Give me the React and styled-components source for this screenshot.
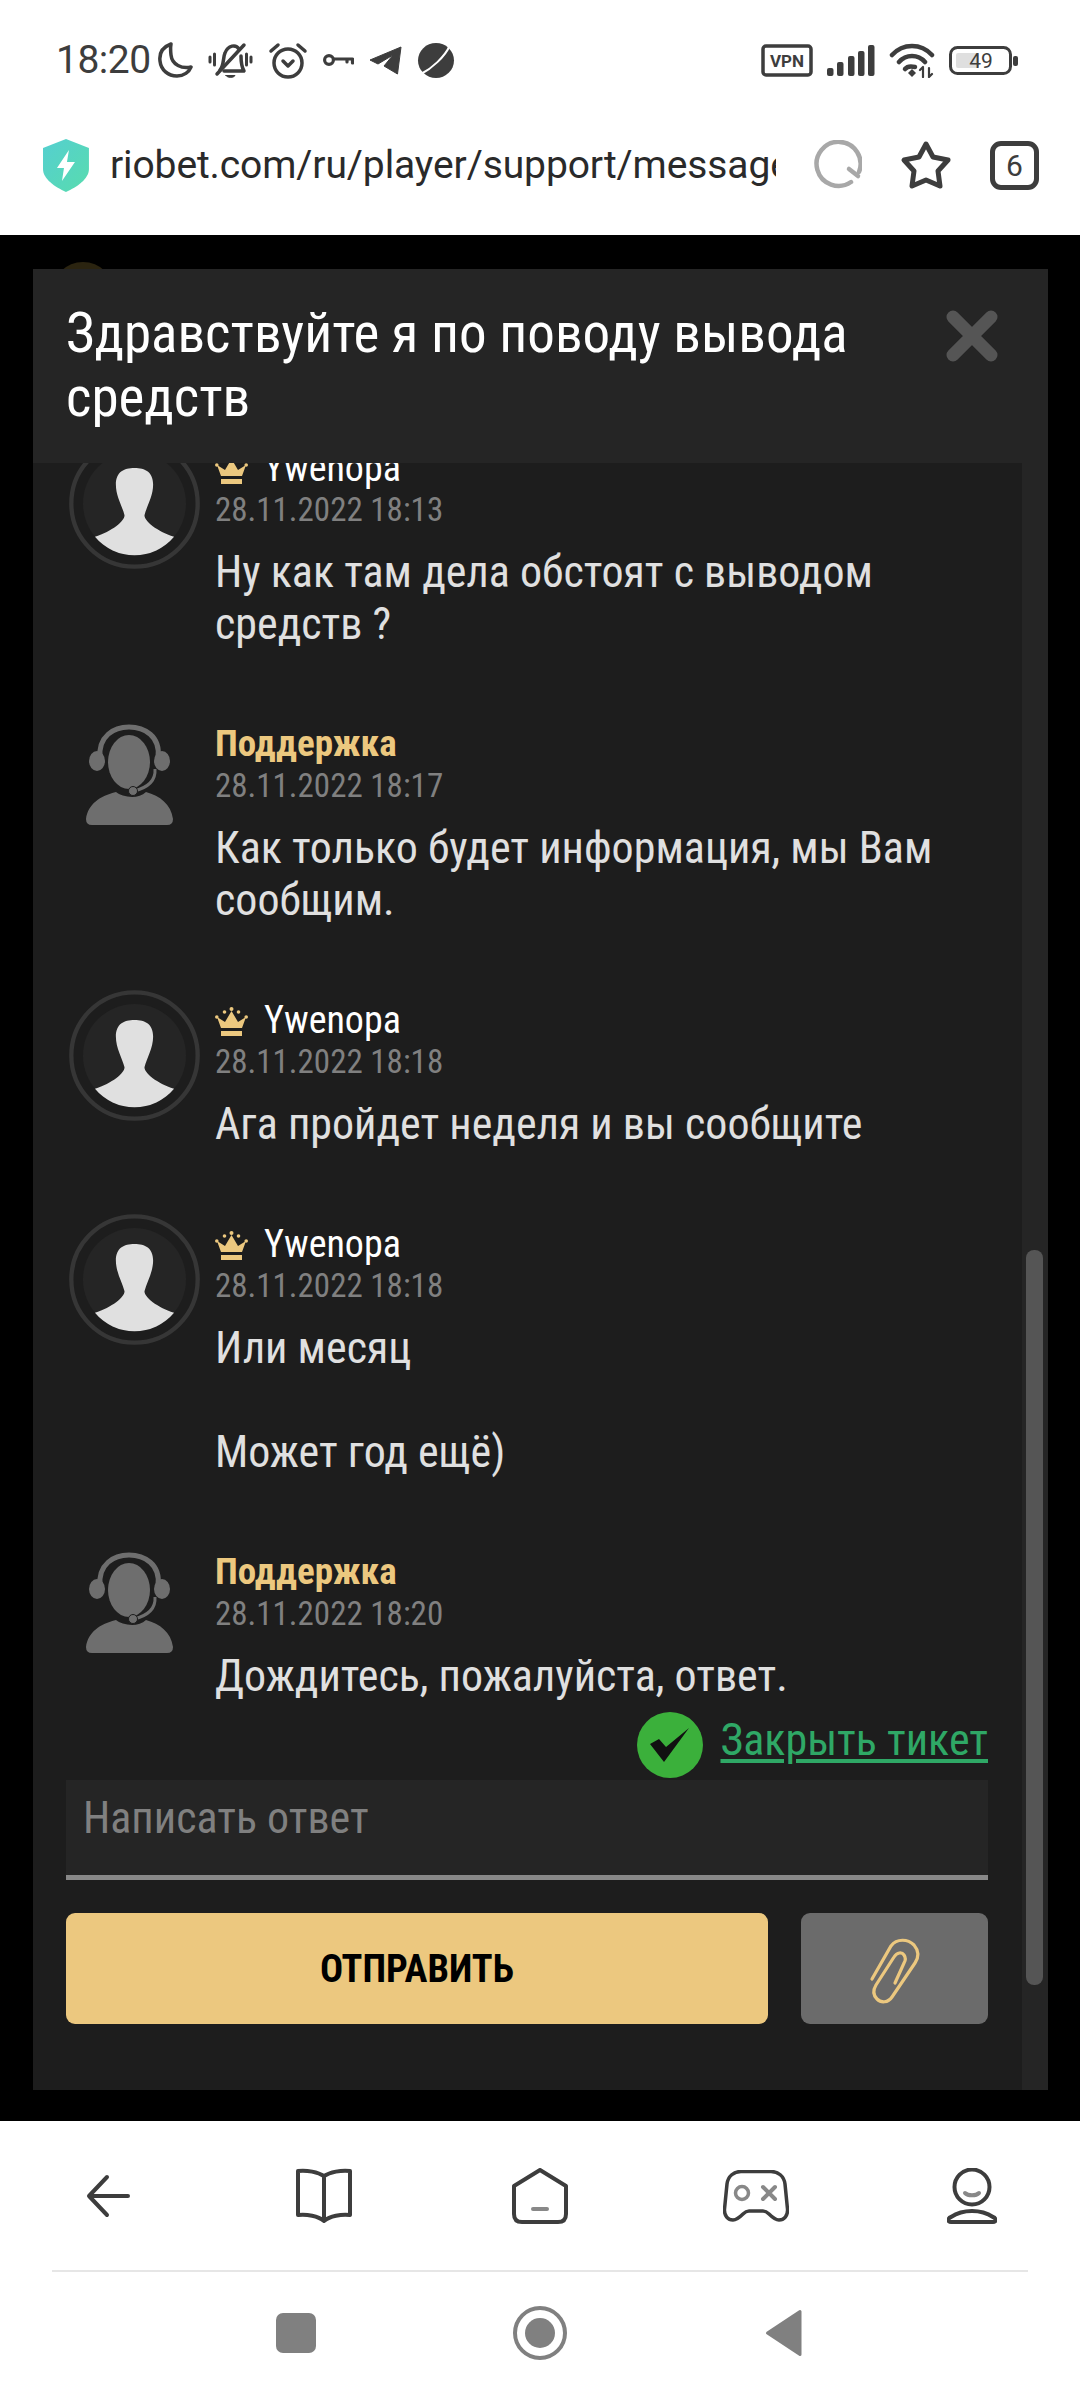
import React from "react";
import styled, { createGlobalStyle } from "styled-components";

const Global = createGlobalStyle`
  html, body { margin: 0; padding: 0; background: #fff; }
  * { box-sizing: border-box; }
  body { font-family: Roboto, "Liberation Sans", sans-serif; font-stretch: 75%; }
`;
const Page = styled.div`width:1080px;height:2400px;display:flex;flex-direction:column;overflow:hidden;`;
const Top = styled.header`height:235px;background:#fff;display:flex;flex-direction:column;`;
const StatusBar = styled.div`height:120px;padding:0 62px 0 56px;display:flex;align-items:center;justify-content:space-between;color:#3d3d3d;`;
const StatusGroup = styled.div`display:flex;align-items:center;gap:${p=>p.$gap||14}px;`;
const Clock = styled.span`font-size:39px;font-stretch:100%;letter-spacing:-.5px;margin-right:-8px;`;
const UrlBar = styled.div`height:115px;display:flex;align-items:center;padding:0 41px 25px 43px;`;
const Url = styled.div`width:667px;margin-left:21px;overflow:hidden;white-space:nowrap;font-size:39px;font-stretch:100%;color:#2a2a2a;letter-spacing:-.1px;`;
const UrlActions = styled.div`margin-left:36px;display:flex;align-items:center;gap:38px;`;
const TabCount = styled.div`width:49px;height:49px;border:5px solid #3d3d3d;border-radius:11px;display:flex;align-items:center;justify-content:center;font-size:30px;font-stretch:100%;color:#3d3d3d;`;
const Stage = styled.main`position:relative;flex:1;background:#000;padding:34px 32px 31px 33px;display:flex;`;
const PeekAvatar = styled.div`position:absolute;left:52px;top:27px;width:62px;height:62px;border-radius:50%;background:#2b2410;`;
const Modal = styled.section`position:relative;flex:1;background:#1d1d1d;display:flex;flex-direction:column;`;
const ModalHead = styled.div`height:194px;background:#252525;padding:32px 49px 0 33px;display:flex;justify-content:space-between;align-items:flex-start;`;
const Title = styled.h1`margin:0;width:830px;font-size:55px;line-height:64px;font-weight:400;color:#fff;`;
const CloseIcon = styled.svg`width:54px;height:54px;margin-top:8px;`;
const ModalBody = styled.div`flex:1;display:flex;min-height:0;`;
const Main = styled.div`flex:1;min-width:0;padding:0 34px 66px 33px;display:flex;flex-direction:column;`;
const Track = styled.div`width:26px;background:#252525;padding:787px 5px 0 4px;`;
const Thumb = styled.div`height:735px;background:#555;border-radius:8px;`;
const Scroller = styled.div`height:1249px;overflow:hidden;flex:none;`;
const ScrollInner = styled.div`margin:-25px 0 0 3px;`;
const Row = styled.article`display:flex;margin-bottom:64px;`;
const AvatarSlot = styled.div`width:146px;flex:none;`;
const Ava = styled.svg`width:131px;height:131px;display:block;`;
const Agent = styled.svg`width:87px;height:101px;display:block;margin:10px 0 0 17px;`;
const Name = styled.div`height:51px;padding-top:9px;line-height:42px;display:flex;align-items:center;gap:16px;font-size:${p=>p.$support?37:38}px;color:${p=>p.$support?"#ecc87f":"#fff"};font-weight:${p=>p.$support?700:400};`;
const Crown = styled.svg`width:33px;height:29px;flex:none;margin-top:2px;`;
const Time = styled.div`font-size:33px;line-height:42px;color:#808080;`;
const Text = styled.p`margin:15px 0 0;font-size:44px;line-height:52px;color:#e0e0e0;white-space:pre-line;`;
const TicketRow = styled.div`height:68px;display:flex;justify-content:flex-end;align-items:flex-start;gap:17px;`;
const Link = styled.a`font-size:44px;line-height:56px;color:#2fa866;text-decoration:underline;text-decoration-thickness:4px;text-underline-offset:4px;`;
const Check = styled.svg`width:66px;height:66px;flex:none;`;
const Input = styled.div`height:100px;background:#252525;border-bottom:5px solid #888;padding:13px 17px 0;font-size:44px;line-height:50px;color:#808080;`;
const Actions = styled.div`margin-top:33px;display:flex;gap:33px;`;
const Send = styled.button`flex:1;height:111px;border:0;border-radius:9px;background:#ecc87f;color:#000;font:700 38.4px Roboto,sans-serif;font-stretch:75%;`;
const Attach = styled.button`width:187px;height:111px;border:0;border-radius:9px;background:#6b6b6b;display:flex;align-items:center;justify-content:center;padding:0;`;
const Bottom = styled.footer`height:279px;background:#fff;display:flex;flex-direction:column;`;
const NavIcons = styled.nav`height:149px;display:grid;grid-template-columns:repeat(5,216px);align-items:center;justify-items:center;`;
const Divider = styled.hr`margin:0 52px;border:0;height:2px;background:#e6e6e6;`;
const SystemNav = styled.nav`flex:1;display:grid;grid-template-columns:repeat(3,244px);justify-content:center;justify-items:center;align-items:center;padding-bottom:6px;`;

const Person = () => (
  <Ava viewBox="0 0 394 394">
    <circle cx="197" cy="197" r="190" fill="none" stroke="#363636" strokeWidth="13"/>
    <circle cx="197" cy="197" r="155" fill="#252525"/>
    <path fill="#e0e0e0" d="M197 90C165 90 141 102 141 140C141 175 160 205 167 232C167 250 130 280 78 297A155 155 0 0 0 316 297C264 280 227 250 227 232C234 205 253 175 253 140C253 102 229 90 197 90Z"/>
  </Ava>
);
const AgentIcon = () => (
  <Agent viewBox="0 0 87 101">
    <path fill="none" stroke="#6e6e6e" strokeWidth="5" d="M14 34C12 12 28 3 43 3C58 3 75 12 72 34"/>
    <ellipse cx="43" cy="38" rx="21" ry="27" fill="#6e6e6e"/>
    <ellipse cx="11" cy="37" rx="8" ry="10" fill="#6e6e6e"/>
    <ellipse cx="76" cy="37" rx="8" ry="10" fill="#6e6e6e"/>
    <path fill="none" stroke="#6e6e6e" strokeWidth="3" d="M69 45C70 58 60 64 48 67"/>
    <circle cx="47" cy="67" r="4.5" fill="#6e6e6e" stroke="#1d1d1d" strokeWidth="1"/>
    <path fill="#6e6e6e" d="M0 95C2 80 14 72 30 68C36 73 52 76 60 68C74 72 85 80 87 95Q87 101 81 101H6Q0 101 0 95Z"/>
  </Agent>
);
const CrownIcon = () => (
  <Crown viewBox="0 0 33 29" fill="#ecc87f">
    <rect x="6" y="24" width="21" height="5"/>
    <path d="M6 21L2 10L10 15L16.5 4L23 15L31 10L27 21Z"/>
    <circle cx="1.8" cy="10" r="1.8"/><circle cx="9.5" cy="5" r="1.8"/><circle cx="16.5" cy="2" r="2"/><circle cx="23.5" cy="5" r="1.8"/><circle cx="31.2" cy="10" r="1.8"/>
  </Crown>
);

const Msg = ({ support, time, text }) => (
  <Row>
    <AvatarSlot>{support ? <AgentIcon/> : <Person/>}</AvatarSlot>
    <div>
      <Name $support={support}>{support ? "Поддержка" : <><CrownIcon/>Ywenopa</>}</Name>
      <Time>28.11.2022 {time}</Time>
      <Text>{text}</Text>
    </div>
  </Row>
);

const S = { fill:"none", stroke:"#3d3d3d", strokeLinecap:"round", strokeLinejoin:"round" };
const StatusIcons = () => (
  <StatusGroup $gap={15}>
    <Clock>18:20</Clock>
    <svg width="35" height="36" viewBox="0 0 35 36" {...S} strokeWidth="3.5"><path d="M13 2C5 5 1 11 2 19C3 28 10 34 19 34C26 34 31 30 33 25C24 27 14 23 13 13C12.5 9 12.5 5 13 2Z"/></svg>
    <svg width="45" height="37" viewBox="0 0 45 37" {...S} strokeWidth="3.5"><path d="M12 28C16 24 15 15 17 11C20 3 28 2 31 7M33 14C33 20 33 24 36 29H16"/><path d="M9 32L36 3"/><path d="M2 15V20M6.5 12V23M38.5 12V23M43 15V20" strokeWidth="3"/><path d="M18 33.5H27C26 36 19 36 18 33.5Z" fill="#3d3d3d" strokeWidth="1"/></svg>
    <svg width="40" height="37" viewBox="0 0 40 37" {...S} strokeWidth="3.5"><circle cx="20" cy="21" r="14"/><path d="M15 19L20 24L25 19" /><path d="M3 9L10 3M37 9L30 3"/></svg>
    <svg width="31" height="14" viewBox="0 0 31 14" {...S} strokeWidth="3.2"><circle cx="6" cy="7" r="4.4"/><path d="M11 6H29.5V10M24 6V9"/></svg>
    <svg width="33" height="29" viewBox="0 0 33 29"><path fill="#3d3d3d" stroke="#3d3d3d" strokeWidth="1" strokeLinejoin="round" d="M1 14L32 1L28.5 28L15 20L24 9L9 18Z"/></svg>
    <svg width="38" height="35" viewBox="0 0 38 35"><ellipse cx="19" cy="17.5" rx="18" ry="17.5" fill="#3d3d3d"/><path d="M4 31C14 26 28 14 33 2" fill="none" stroke="#fff" strokeWidth="2"/></svg>
  </StatusGroup>
);
const StatusRight = () => (
  <StatusGroup $gap={14}>
    <svg width="52" height="33" viewBox="0 0 52 33"><rect x="2" y="2" width="48" height="29" rx="3" fill="none" stroke="#3d3d3d" strokeWidth="3.5"/><text x="26" y="22.5" textAnchor="middle" fontSize="17" fontWeight="700" fontFamily="Roboto" fill="#3d3d3d" style={{fontStretch:"100%"}}>VPN</text></svg>
    <svg width="48" height="31" viewBox="0 0 48 31" fill="#3d3d3d"><rect x="0" y="23" width="6.5" height="8" rx="2"/><rect x="10" y="17" width="6.5" height="14" rx="2"/><rect x="21" y="11" width="6.5" height="20" rx="2"/><rect x="31" y="6" width="6.5" height="25" rx="2"/><rect x="41" y="0" width="6.5" height="31" rx="2"/></svg>
    <svg width="46" height="35" viewBox="0 0 46 35" {...S} strokeWidth="4.5"><path d="M3 12C14 0 32 0 43 12M10 19C17 11 29 11 36 19"/><path d="M16 26C18 23.5 22 23 26 24" /><path d="M19 30L23 26L27 30L23 34Z" fill="#3d3d3d" stroke="none"/><path d="M34 25V34M40 25V34M31 27L34 24M40 34L43 31" strokeWidth="2.2"/></svg>
    <svg width="69" height="29" viewBox="0 0 69 29"><rect x="1.5" y="1.5" width="60" height="26" rx="7" fill="none" stroke="#3d3d3d" strokeWidth="3"/><rect x="7" y="7" width="23" height="15" rx="2" fill="#dfdfdf"/><text x="32" y="22" textAnchor="middle" fontSize="21" fontFamily="Roboto" fill="#3d3d3d" style={{fontStretch:"100%"}}>49</text><rect x="64" y="10" width="5" height="10" rx="2" fill="#3d3d3d"/></svg>
  </StatusGroup>
);

export default function App() {
  return (
    <Page>
      <Global/>
      <Top>
        <StatusBar><StatusIcons/><StatusRight/></StatusBar>
        <UrlBar>
          <svg width="46" height="53" viewBox="0 0 46 53">
            <defs><linearGradient id="sh" x1="0" y1="0" x2="1" y2="1"><stop offset="0" stopColor="#55cfd0"/><stop offset="1" stopColor="#58dcae"/></linearGradient></defs>
            <path fill="url(#sh)" d="M23 0L46 9V30C46 40 34 48 23 53C12 48 0 40 0 30V9Z"/>
            <path fill="#fff" d="M26 11L14 29H21L19 42L32 23H24Z"/>
          </svg>
          <Url>riobet.com/ru/player/support/messages</Url>
          <UrlActions>
            <svg width="50" height="50" viewBox="0 0 50 50" fill="none" stroke="#a8a8a8" strokeWidth="4.5" strokeLinecap="round"><path d="M39 42A22 22 0 1 1 47 32"/><path d="M37 29L46 36"/></svg>
            <svg width="52" height="50" viewBox="0 0 52 50" fill="none" stroke="#3d3d3d" strokeWidth="5" strokeLinejoin="round"><path d="M26 4L33 17L48 20L38 31L40 46L26 40L12 46L14 31L4 20L19 17Z"/></svg>
            <TabCount>6</TabCount>
          </UrlActions>
        </UrlBar>
      </Top>
      <Stage>
        <PeekAvatar/>
        <Modal>
          <ModalHead>
            <Title>Здравствуйте я по поводу вывода средств</Title>
            <CloseIcon viewBox="0 0 54 54"><path d="M8 8L46 46M46 8L8 46" stroke="#555" strokeWidth="13" strokeLinecap="round"/></CloseIcon>
          </ModalHead>
          <ModalBody>
            <Main>
              <Scroller>
                <ScrollInner>
                  <Msg time="18:13" text={"Ну как там дела обстоят с выводом\nсредств ?"}/>
                  <Msg support time="18:17" text={"Как только будет информация, мы Вам\nсообщим."}/>
                  <Msg time="18:18" text="Ага пройдет неделя и вы сообщите"/>
                  <Msg time="18:18" text={"Или месяц\n\nМожет год ещё)"}/>
                  <Msg support time="18:20" text="Дождитесь, пожалуйста, ответ."/>
                </ScrollInner>
              </Scroller>
              <TicketRow>
                <Check viewBox="0 0 66 66"><circle cx="33" cy="33" r="33" fill="#3bb03b"/><path d="M13 32L22 27L29 35L52 16L27 50Z" fill="#111"/></Check>
                <Link>Закрыть тикет</Link>
              </TicketRow>
              <Input>Написать ответ</Input>
              <Actions>
                <Send>ОТПРАВИТЬ</Send>
                <Attach>
                  <svg width="90" height="90" viewBox="0 0 90 90" fill="none" stroke="#ecc87f" strokeWidth="3.2" strokeLinecap="round"><path d="M22 55L41 22C47 14 58 15 64 21C69 27 69 33 65 39L42 73C38 79 31 79 27 75C23 71 23 66 26 61L44 33C47 28 52 28 54 31C56 34 56 36 54 39L45 59"/></svg>
                </Attach>
              </Actions>
            </Main>
            <Track><Thumb/></Track>
          </ModalBody>
        </Modal>
      </Stage>
      <Bottom>
        <NavIcons>
          <svg width="44" height="44" viewBox="0 0 44 44" {...S} strokeWidth="4"><path d="M42 22H3M21 3L3 22L21 41"/></svg>
          <svg width="58" height="56" viewBox="0 0 58 56" {...S} strokeWidth="4"><path d="M29 8C23 4 12 2 3 3V47C12 46 23 48 29 53C35 48 46 46 55 47V3C46 2 35 4 29 8V53"/></svg>
          <svg width="58" height="56" viewBox="0 0 58 56" {...S} strokeWidth="4"><path d="M29 2L55 18V46Q55 54 47 54H11Q3 54 3 46V18Z"/><path d="M22 41H36" stroke="#888" strokeWidth="4"/></svg>
          <svg width="66" height="52" viewBox="0 0 66 52" {...S} strokeWidth="3.5"><path d="M18 1.5H48C55 1.5 61 6 62 14L64.5 39C65 46 61 50 56 50C52 50 49 47 46 44C44 42 42 41 40 41H26C24 41 22 42 20 44C17 47 14 50 10 50C5 50 1 46 1.5 39L4 14C5 6 11 1.5 18 1.5Z"/><circle cx="19" cy="23" r="6.5" stroke="#888" strokeWidth="3.5"/><path d="M40 17L52 29M52 17L40 29" stroke="#888" strokeWidth="4"/></svg>
          <svg width="50" height="56" viewBox="0 0 50 56" {...S} strokeWidth="4"><circle cx="25" cy="19" r="17.5"/><path d="M18 25C21 28 29 28 32 25" stroke="#888"/><path d="M4 54C0 54 1 50 4 49C10 45 17 43 25 43C33 43 40 45 46 49C49 50 50 54 46 54Z"/></svg>
        </NavIcons>
        <Divider/>
        <SystemNav>
          <svg width="40" height="40" viewBox="0 0 40 40"><rect width="40" height="40" rx="7" fill="#808080"/></svg>
          <svg width="54" height="54" viewBox="0 0 54 54"><circle cx="27" cy="27" r="25" fill="none" stroke="#808080" strokeWidth="4"/><circle cx="27" cy="27" r="15" fill="#808080"/></svg>
          <svg width="38" height="48" viewBox="0 0 38 48"><path d="M35 2.5V45.5L2.5 24Z" fill="#808080" stroke="#808080" strokeWidth="3" strokeLinejoin="round"/></svg>
        </SystemNav>
      </Bottom>
    </Page>
  );
}
